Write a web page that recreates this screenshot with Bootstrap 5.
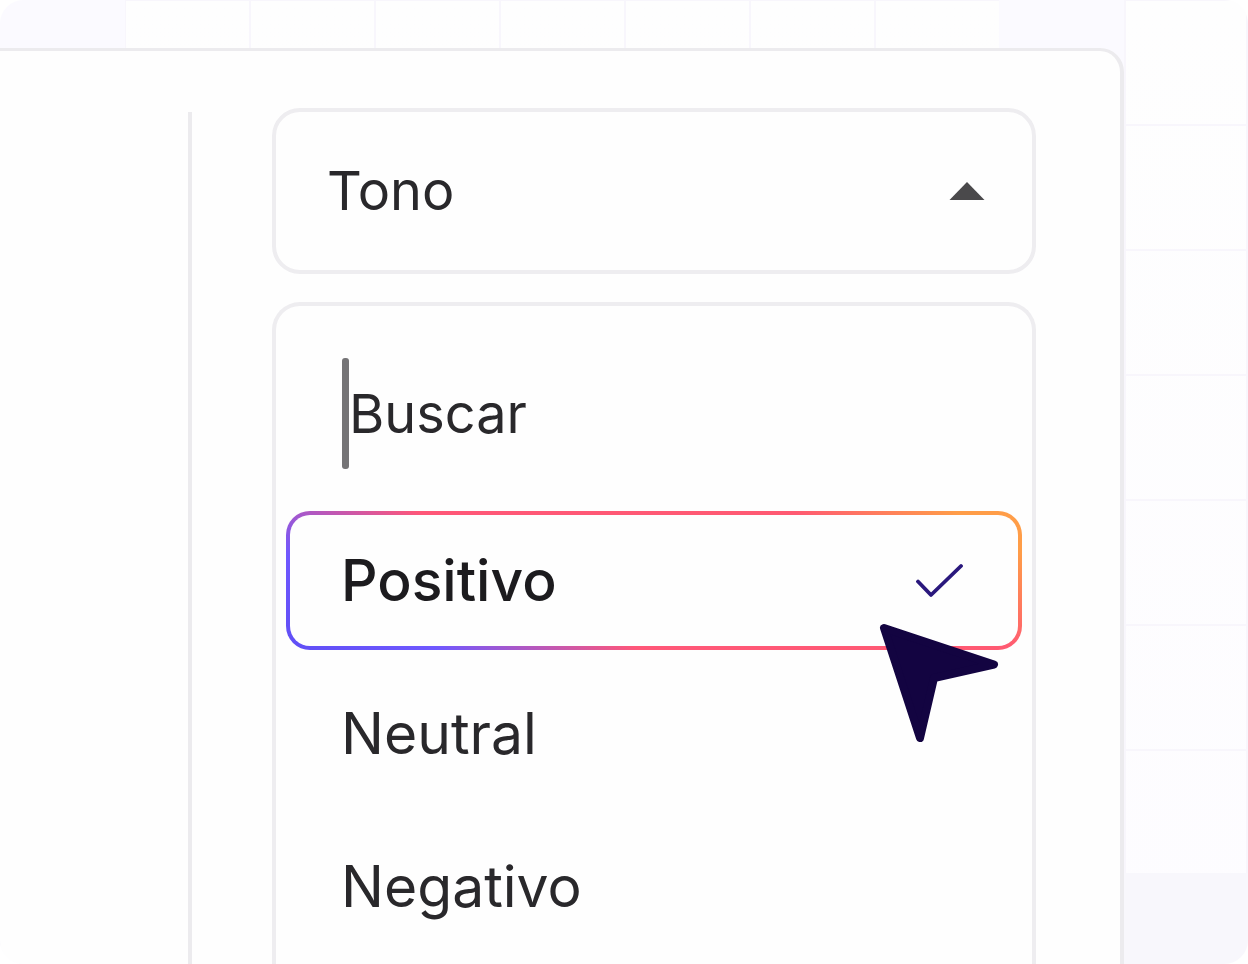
<!DOCTYPE html>
<html lang="es">
<head>
<meta charset="utf-8">
<meta name="viewport" content="width=device-width, initial-scale=1">
<title>Tono</title>
<link href="https://cdn.jsdelivr.net/npm/bootstrap@5.3.0/dist/css/bootstrap.min.css" rel="stylesheet">
<style>
  :root { --line: #ecebee; --ink: #29282b; --surface: #fefefe; --tint: #fbfaff; }
  body { font-family: Inter, "Liberation Sans", sans-serif; font-size: 54px; line-height: 68px; color: var(--ink); background: #fff; }
  /* squared backdrop with a few tinted cells */
  .stage {
    padding: 48px 124px 0 0;
    border-radius: 24px;
    background:
      linear-gradient(var(--tint), var(--tint)) 0 0 / 125px 125px no-repeat,
      linear-gradient(var(--tint), var(--tint)) right 124px top 0 / 125px 125px no-repeat,
      linear-gradient(#f8f7fc, #f8f7fc) right 0 bottom 0 / 124px 91px no-repeat,
      linear-gradient(#f8f6fc, #f8f6fc) right 0 top 0 / 2px 100% no-repeat,
      repeating-linear-gradient(to right, #f8f6fc 0 1px, transparent 1px 124px, #f8f6fc 124px 125px),
      repeating-linear-gradient(to bottom, #f8f6fc 0 1px, transparent 1px 124px, #f8f6fc 124px 125px),
      linear-gradient(#fefefe, #fdfcff);
  }
  .sheet { background: var(--surface); border: 0 solid var(--line); border-width: 3px 4px 0 0; border-top-right-radius: 24px; }
  .rail { width: 192px; margin-top: 61px; border-right: 4px solid var(--line); }
  .filter { padding: 57px 84px 0 80px; gap: 28px; min-width: 0; }
  .trigger { height: 166px; padding: 0 47px 0 51px; border: 4px solid #eeedf0; border-radius: 28px; background: var(--surface); color: inherit; }
  .choices { padding: 0 10px 6px; border: 4px solid #eeedf0; border-bottom: 0; border-radius: 28px 28px 0 0; background: var(--surface); }
  .search { height: 205px; padding: 10px 48px 0 56px; }
  .text-cursor { width: 7px; height: 111px; border-radius: 3px; background: #757476; }
  .search input { border: 0; padding: 0; background: none; outline: 0; width: 100%; min-width: 0; color: inherit; }
  .search input::placeholder { color: var(--ink); opacity: 1; }
  .options { gap: 14px; font-size: 57px; }
  .option { height: 139px; padding: 0 55px 0 51px; border: 4px solid transparent; border-radius: 24px; background: none; color: inherit; }
  .option.chosen {
    font-weight: 500; color: #1c1b1e;
    background:
      linear-gradient(var(--surface), var(--surface)) padding-box,
      linear-gradient(32deg, #5f4ef5 0, #6f58ff 16%, #ff5778 37%, #ff5a72 76%, #ff9d48 93%) border-box;
  }
  .pointer { right: 22px; top: 112px; pointer-events: none; }
</style>
</head>
<body>
<main class="stage d-flex min-vh-100 overflow-hidden">
  <section class="sheet d-flex flex-grow-1">
    <aside class="rail flex-shrink-0"></aside>
    <div class="filter d-flex flex-column flex-grow-1">
      <button type="button" class="trigger d-flex align-items-center justify-content-between" aria-expanded="true" aria-controls="tones">
        <span>Tono</span>
        <svg width="36" height="18" viewBox="0 0 36 18" aria-hidden="true"><path d="M18 0 35.500 18H.5Z" fill="#4a494b"/></svg>
      </button>
      <div class="choices flex-grow-1" id="tones">
        <div class="search d-flex align-items-center">
          <span class="text-cursor flex-shrink-0"></span>
          <input type="text" placeholder="Buscar" aria-label="Buscar">
        </div>
        <div class="options d-flex flex-column">
          <div class="position-relative d-flex flex-column">
            <button type="button" class="option chosen d-flex align-items-center justify-content-between" aria-pressed="true">
              <span>Positivo</span>
              <svg width="48" height="36" viewBox="0 0 48 36" fill="none" aria-hidden="true"><path d="M3 18.500 16 32 46 3" stroke="#2a187d" stroke-width="3.800" stroke-linecap="round" stroke-linejoin="round"/></svg>
            </button>
            <svg class="pointer position-absolute" width="121" height="121" viewBox="0 0 121 121" aria-hidden="true"><path d="M5 5 115 41.500 55 55 41 115Z" fill="#130441" stroke="#130441" stroke-width="8" stroke-linejoin="round"/></svg>
          </div>
          <button type="button" class="option d-flex align-items-center" aria-pressed="false">Neutral</button>
          <button type="button" class="option d-flex align-items-center" aria-pressed="false">Negativo</button>
        </div>
      </div>
    </div>
  </section>
</main>
<script src="https://cdn.jsdelivr.net/npm/bootstrap@5.3.0/dist/js/bootstrap.bundle.min.js"></script>
</body>
</html>
